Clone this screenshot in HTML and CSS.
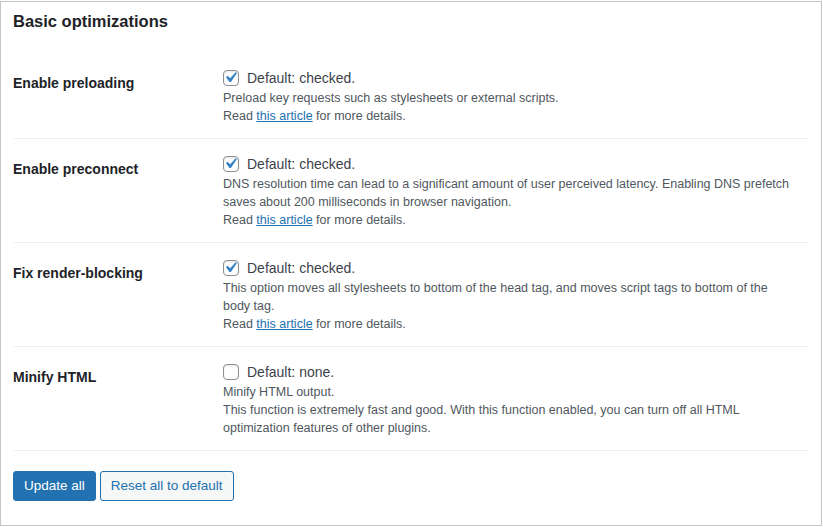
FILE: index.html
```html
<!DOCTYPE html>
<html>
<head>
<meta charset="utf-8">
<link rel="stylesheet" href="styles.css">
</head>
<body>
<div class="panel">
  <h2 class="title">Basic optimizations</h2>
  <div class="table">
    <div class="row">
      <div class="th">Enable preloading</div>
      <div class="td">
        <label class="check"><span class="box"><svg viewBox="0 0 20 20"><path d="M14.83 4.89l1.34.94-5.81 8.38H9.02L5.78 9.67l1.34-1.25 2.57 2.4z" fill="#3582c4"/></svg></span>Default: checked.</label>
        <p class="desc">Preload key requests such as stylesheets or external scripts.<br>Read <a href="#">this article</a> for more details.</p>
      </div>
    </div>
    <div class="row">
      <div class="th">Enable preconnect</div>
      <div class="td">
        <label class="check"><span class="box"><svg viewBox="0 0 20 20"><path d="M14.83 4.89l1.34.94-5.81 8.38H9.02L5.78 9.67l1.34-1.25 2.57 2.4z" fill="#3582c4"/></svg></span>Default: checked.</label>
        <p class="desc">DNS resolution time can lead to a significant amount of user perceived latency. Enabling DNS prefetch saves about 200 milliseconds in browser navigation.<br>Read <a href="#">this article</a> for more details.</p>
      </div>
    </div>
    <div class="row">
      <div class="th">Fix render-blocking</div>
      <div class="td">
        <label class="check"><span class="box"><svg viewBox="0 0 20 20"><path d="M14.83 4.89l1.34.94-5.81 8.38H9.02L5.78 9.67l1.34-1.25 2.57 2.4z" fill="#3582c4"/></svg></span>Default: checked.</label>
        <p class="desc">This option moves all stylesheets to bottom of the head tag, and moves script tags to bottom of the body tag.<br>Read <a href="#">this article</a> for more details.</p>
      </div>
    </div>
    <div class="row">
      <div class="th">Minify HTML</div>
      <div class="td">
        <label class="check"><span class="box"></span>Default: none.</label>
        <p class="desc">Minify HTML output.<br>This function is extremely fast and good. With this function enabled, you can turn off all HTML optimization features of other plugins.</p>
      </div>
    </div>
  </div>
  <div class="actions">
    <button class="btn primary">Update all</button>
    <button class="btn secondary">Reset all to default</button>
  </div>
</div>
</body>
</html>
```
FILE: styles.css
```css
html, body {
  margin: 0;
  padding: 0;
  background: #fff;
}
body {
  font-family: "Liberation Sans", Arial, sans-serif;
  color: #3c434a;
}
.panel {
  box-sizing: border-box;
  width: 822px;
  height: 525px;
  margin-top: 1px;
  border: 1px solid #c3c4c7;
  padding: 0 12px;
  background: #fff;
}
.title {
  margin: 8px 0 0;
  font-size: 16.5px;
  line-height: 22px;
  font-weight: 600;
  color: #1d2327;
}
.table {
  margin-top: 21px;
}
.row {
  display: flex;
  border-bottom: 1px solid #f0f0f1;
}
.th {
  width: 200px;
  padding: 21px 10px 19px 0;
  font-size: 14px;
  line-height: 18px;
  font-weight: 600;
  color: #1d2327;
  flex-shrink: 0;
}
.td {
  flex: 1;
  padding: 15px 16px 13px 0;
}
.check {
  display: flex;
  align-items: center;
  height: 20px;
  font-size: 14px;
  color: #3c434a;
}
.box {
  box-sizing: border-box;
  width: 16px;
  height: 16px;
  border: 1px solid #8c8f94;
  border-radius: 4px;
  margin-right: 8px;
  box-shadow: inset 0 1px 2px rgba(0,0,0,0.1);
  position: relative;
  background: #fff;
}
.box svg {
  position: absolute;
  left: -4px;
  top: -4px;
  width: 21px;
  height: 21px;
}
.desc {
  margin: 1px 0 0;
  font-size: 12.5px;
  line-height: 18px;
  color: #50575e;
}
.desc a {
  color: #2271b1;
  text-decoration: underline;
}
.actions {
  display: flex;
  gap: 4px;
  margin-top: 20px;
}
.btn {
  box-sizing: border-box;
  height: 30px;
  padding: 0 10px;
  border-radius: 3px;
  font-family: inherit;
  font-size: 13.5px;
  line-height: 28px;
  cursor: pointer;
}
.primary {
  background: #2271b1;
  border: 1px solid #2271b1;
  color: #fff;
}
.secondary {
  background: #f6f7f7;
  border: 1px solid #2271b1;
  color: #2271b1;
}
```
